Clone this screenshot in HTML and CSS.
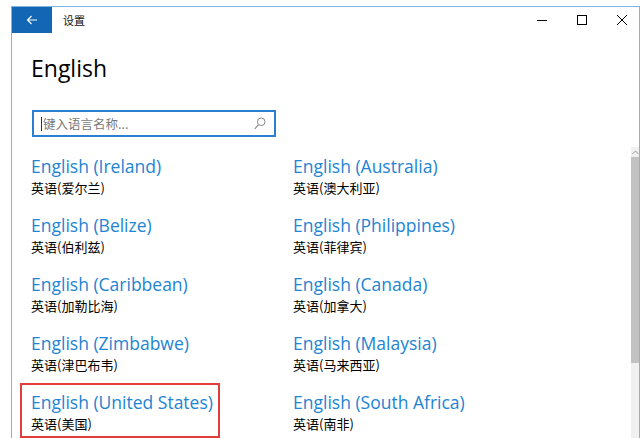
FILE: index.html
```html
<!DOCTYPE html>
<html lang="zh-CN">

<head>
    <meta charset="utf-8">
    <link rel="stylesheet" href="styles.css">
</head>

<body>
    <div class="window">
        <div class="titlebar">
            <button class="back-button" aria-label="Back">
                <svg width="12" height="10" viewBox="0 0 12 10">
                    <path d="M11 5H1.5M5.5 1L1.5 5l4 4" fill="none" stroke="#fff" stroke-width="1.1"/>
                </svg>
            </button>
            <span class="app-title">设置</span>
            <div class="window-controls">
                <button class="control" aria-label="Minimize">
                    <svg width="10" height="10" viewBox="0 0 10 10"><path d="M0 5.5h10" stroke="#000" stroke-width="1"/></svg>
                </button>
                <button class="control" aria-label="Maximize">
                    <svg width="10" height="10" viewBox="0 0 10 10"><rect x="0.5" y="0.5" width="9" height="9" fill="none" stroke="#000" stroke-width="1"/></svg>
                </button>
                <button class="control" aria-label="Close">
                    <svg width="10" height="10" viewBox="0 0 10 10"><path d="M0 0l10 10M10 0L0 10" stroke="#000" stroke-width="1"/></svg>
                </button>
            </div>
        </div>

        <div class="body-row">
            <div class="content">
                <h1 class="page-title">English</h1>

                <div class="search-box">
                    <span class="caret"></span>
                    <input type="text" placeholder="键入语言名称...">
                    <svg class="search-icon" width="12" height="13" viewBox="0 0 12 13">
                        <circle cx="7.2" cy="4.8" r="3.8" fill="none" stroke="#888" stroke-width="1"/>
                        <path d="M4.5 7.6L0.8 11.8" stroke="#888" stroke-width="1.1"/>
                    </svg>
                </div>

                <div class="language-list">
                    <div class="language"><div class="lang-name">English (Ireland)</div><div class="lang-native">英语(爱尔兰)</div></div>
                    <div class="language"><div class="lang-name">English (Australia)</div><div class="lang-native">英语(澳大利亚)</div></div>
                    <div class="language"><div class="lang-name">English (Belize)</div><div class="lang-native">英语(伯利兹)</div></div>
                    <div class="language"><div class="lang-name">English (Philippines)</div><div class="lang-native">英语(菲律宾)</div></div>
                    <div class="language"><div class="lang-name">English (Caribbean)</div><div class="lang-native">英语(加勒比海)</div></div>
                    <div class="language"><div class="lang-name">English (Canada)</div><div class="lang-native">英语(加拿大)</div></div>
                    <div class="language"><div class="lang-name">English (Zimbabwe)</div><div class="lang-native">英语(津巴布韦)</div></div>
                    <div class="language"><div class="lang-name">English (Malaysia)</div><div class="lang-native">英语(马来西亚)</div></div>
                    <div class="language selected"><div class="lang-name">English (United States)</div><div class="lang-native">英语(美国)</div></div>
                    <div class="language"><div class="lang-name">English (South Africa)</div><div class="lang-native">英语(南非)</div></div>
                </div>
            </div>

            <div class="scrollbar">
                <div class="scroll-arrow">
                    <svg width="7" height="5" viewBox="0 0 7 5"><path d="M0.5 4L3.5 1l3 3" fill="none" stroke="#999" stroke-width="1"/></svg>
                </div>
                <div class="scroll-thumb"></div>
            </div>
        </div>
    </div>
</body>

</html>
```

FILE: styles.css
```css
body {
    font-family: "Open Sans", "Noto Sans CJK SC", sans-serif;
    margin: 0;
    padding: 0;
    background-color: white;
    overflow: hidden;
}

.window {
    margin: 6px 0 0 11px;
    width: 627px;
    height: 432px;
    border: 1px solid #7fb5e4;
    border-bottom: none;
    display: flex;
    flex-direction: column;
}

.titlebar {
    height: 26px;
    display: flex;
    align-items: center;
    flex-shrink: 0;
}

.back-button {
    width: 40px;
    height: 26px;
    background-color: #1366b3;
    border: none;
    padding: 0;
    display: flex;
    align-items: center;
    justify-content: center;
}

.app-title {
    margin-left: 11px;
    font-family: "Noto Sans CJK SC", sans-serif;
    font-size: 11px;
    color: #111;
}

.window-controls {
    margin-left: auto;
    display: flex;
}

.control {
    width: 40px;
    height: 26px;
    background: none;
    border: none;
    padding: 0 0 0 6px;
    display: flex;
    align-items: center;
    justify-content: center;
}

.body-row {
    flex-grow: 1;
    display: flex;
    min-height: 0;
}

.content {
    flex-grow: 1;
    padding-left: 19px;
}

.page-title {
    margin: 19px 0 0 0;
    font-size: 23px;
    line-height: 32px;
    font-weight: 400;
    color: #000;
}

.search-box {
    margin: 26px 0 0 1px;
    width: 240px;
    height: 23px;
    border: 2px solid #2a7fd2;
    display: flex;
    align-items: center;
}

.caret {
    width: 1px;
    height: 14px;
    background-color: #333;
    margin-left: 7px;
}

.search-box input {
    flex-grow: 1;
    border: none;
    outline: none;
    padding: 0 0 0 1px;
    font-family: "Noto Sans CJK SC", sans-serif;
    font-size: 12.5px;
    background: none;
    min-width: 0;
}

.search-box input::placeholder {
    color: #7a7a7a;
}

.search-icon {
    margin-right: 8px;
}

.language-list {
    margin: 10px 0 0 -11px;
    display: grid;
    grid-template-columns: 262px 262px;
    row-gap: 4px;
}

.language {
    width: fit-content;
    padding: 5px 5px 3px 9px;
    border: 2px solid transparent;
}

.language.selected {
    border-color: #e23c3c;
}

.lang-name {
    font-size: 17.5px;
    line-height: 24px;
    color: #2284d2;
    white-space: nowrap;
}

.lang-native {
    font-family: "Noto Sans CJK SC", sans-serif;
    font-size: 13px;
    line-height: 19px;
    color: #000;
}

.scrollbar {
    width: 8px;
    margin-top: 114px;
    background-color: #f0f0f0;
    display: flex;
    flex-direction: column;
}

.scroll-arrow {
    height: 10px;
    display: flex;
    align-items: center;
    justify-content: center;
}

.scroll-thumb {
    height: 206px;
    background-color: #c2c2c2;
}
```
